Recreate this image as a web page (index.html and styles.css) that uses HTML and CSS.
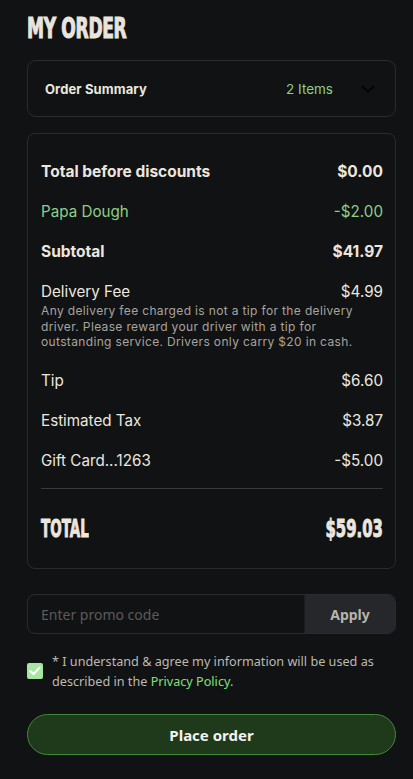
FILE: index.html
```html
<!DOCTYPE html>
<html lang="en">
<head>
<meta charset="utf-8">
<title>My Order</title>
<link rel="stylesheet" href="styles.css">
</head>
<body>
<main class="page">
  <h1 class="title"><span class="title-text">MY ORDER</span></h1>

  <div class="summary">
    <span class="summary-label">Order Summary</span>
    <span class="summary-count">2 Items</span>
    <svg class="chevron" width="14" height="8" viewBox="0 0 14 8" aria-hidden="true">
      <path d="M1.5 1.5 L7 6.5 L12.5 1.5" fill="none" stroke="#040404" stroke-width="1.8" stroke-linecap="round" stroke-linejoin="round"/>
    </svg>
  </div>

  <section class="card">
    <div class="row bold"><span>Total before discounts</span><span>$0.00</span></div>
    <div class="row green"><span>Papa Dough</span><span>-$2.00</span></div>
    <div class="row bold"><span>Subtotal</span><span>$41.97</span></div>
    <div class="row-block">
      <div class="row-line"><span>Delivery Fee</span><span>$4.99</span></div>
      <p class="note">Any delivery fee charged is not a tip for the delivery driver. Please reward your driver with a tip for outstanding service. Drivers only carry $20 in cash.</p>
    </div>
    <div class="row"><span>Tip</span><span>$6.60</span></div>
    <div class="row"><span>Estimated Tax</span><span>$3.87</span></div>
    <div class="row"><span>Gift Card...1263</span><span>-$5.00</span></div>
    <hr class="divider">
    <div class="row total"><span class="cond">TOTAL</span><span class="cond">$59.03</span></div>
  </section>

  <div class="promo">
    <input class="promo-input" type="text" placeholder="Enter promo code">
    <button class="promo-apply" type="button">Apply</button>
  </div>

  <label class="agree">
    <span class="checkbox">
      <svg width="12" height="10" viewBox="0 0 12 10" aria-hidden="true">
        <path d="M1.5 5.2 L4.6 8 L10.5 1.8" fill="none" stroke="#ffffff" stroke-width="2.2" stroke-linecap="round" stroke-linejoin="round"/>
      </svg>
    </span>
    <span class="agree-text">* I understand &amp; agree my information will be used as described in the <a class="link" href="#">Privacy Policy</a>.</span>
  </label>

  <button class="place" type="button">Place order</button>
</main>
</body>
</html>
```

FILE: styles.css
```css
html, body {
  margin: 0;
  padding: 0;
  background: #111214;
}

body {
  color: #ebe7df;
  font-family: Inter, "Noto Sans", sans-serif;
}

.page {
  padding: 0 17px 0 27px;
  display: flex;
  flex-direction: column;
}

.title {
  margin: 14px 0 0;
  height: 29px;
  font-family: "DejaVu Sans", sans-serif;
  font-stretch: condensed;
  font-weight: 700;
  font-size: 29px;
  line-height: 29px;
  color: #e9e5de;
  letter-spacing: -0.5px;
}

.title-text {
  display: inline-block;
  transform: scaleX(0.655);
  transform-origin: 0 50%;
  white-space: nowrap;
  -webkit-text-stroke: 1.1px #e9e5de;
}

.summary {
  margin-top: 17px;
  height: 55px;
  border: 1px solid #2a2b2e;
  border-radius: 9px;
  display: flex;
  align-items: center;
  padding: 0 20px 0 17px;
}

.summary-label {
  font-weight: 700;
  font-size: 13px;
  letter-spacing: 0.1px;
  flex: 1;
}

.summary-count {
  color: #8ccf86;
  font-size: 13.5px;
  margin-right: 28px;
}

.chevron {
  display: block;
}

.card {
  margin-top: 16px;
  border: 1px solid #2a2b2e;
  border-radius: 8px;
  padding: 17px 12px 20px 13px;
  display: flex;
  flex-direction: column;
}

.row, .row-line {
  display: flex;
  justify-content: space-between;
  align-items: center;
  font-size: 15.2px;
}

.row {
  height: 40px;
}

.row.bold {
  font-weight: 700;
  font-size: 15.5px;
}

.row.green {
  color: #8ccf86;
}

.row-block {
  padding: 10px 0;
}

.row-line {
  height: 20px;
}

.note {
  margin: 2px 0 0;
  font-size: 12px;
  line-height: 15.7px;
  letter-spacing: 0.35px;
  color: #a8a49d;
}

.divider {
  margin: 8px 0 0;
  border: 0;
  height: 1px;
  background: #393a3d;
}

.row.total {
  margin-top: 19px;
}

.cond {
  display: inline-block;
  font-family: "DejaVu Sans", sans-serif;
  font-stretch: condensed;
  font-weight: 700;
  font-size: 25px;
  white-space: nowrap;
  -webkit-text-stroke: 0.9px #ebe7df;
}

.row.total .cond:first-child {
  transform: scaleX(0.6);
  transform-origin: 0 50%;
}

.row.total .cond:last-child {
  transform: scaleX(0.66);
  transform-origin: 100% 50%;
}

.promo {
  margin-top: 25px;
  height: 40px;
  display: flex;
  border: 1px solid #2a2b2e;
  border-radius: 8px;
  overflow: hidden;
  box-sizing: border-box;
}

.promo-input {
  flex: 1;
  min-width: 0;
  border: 0;
  outline: none;
  background: transparent;
  padding: 0 13px;
  font-family: "Noto Sans", sans-serif;
  font-size: 14px;
  color: #ebe7df;
}

.promo-input::placeholder {
  color: #5b5b5b;
}

.promo-apply {
  width: 91px;
  border: 0;
  border-left: 1px solid #1b1c1e;
  background: #25272a;
  color: #b8b4ad;
  font-family: "Noto Sans", sans-serif;
  font-weight: 700;
  font-size: 14px;
  padding: 0;
}

.agree {
  margin-top: 17px;
  display: flex;
  align-items: center;
  gap: 9px;
}

.checkbox {
  flex: none;
  width: 16px;
  height: 16px;
  border-radius: 2px;
  background: #a6e6a0;
  display: flex;
  align-items: center;
  justify-content: center;
}

.checkbox svg {
  display: block;
}

.agree-text {
  font-family: "Noto Sans", sans-serif;
  font-size: 12.65px;
  line-height: 20px;
  color: #bdb9b1;
}

.link {
  color: #7fe07a;
  text-decoration: none;
}

.place {
  margin-top: 23px;
  height: 41px;
  border: 1px solid #3f8a38;
  border-radius: 21px;
  background: #1f3a1b;
  color: #f4f2ee;
  font-family: "Noto Sans", sans-serif;
  font-weight: 700;
  font-size: 15px;
  padding: 0;
}
```
